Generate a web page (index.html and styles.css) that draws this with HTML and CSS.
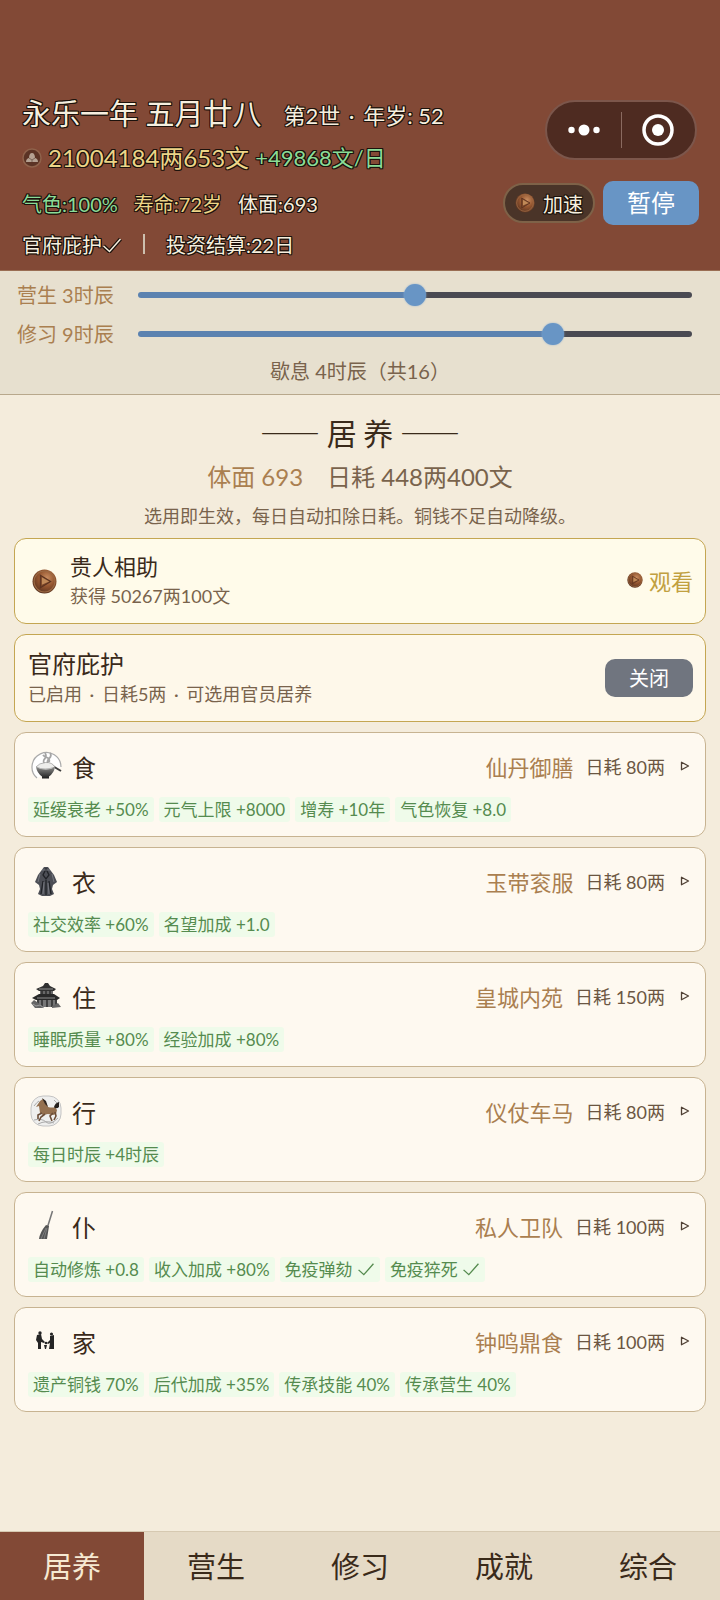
FILE: index.html
```html
<!DOCTYPE html>
<html lang="zh-CN">
<head>
    <meta charset="UTF-8">
    <meta name="viewport" content="width=device-width, initial-scale=1.0">
    <title>居养</title>
    <link rel="stylesheet" href="styles.css">
</head>
<body>
    <!-- 公用图标 -->
    <svg class="defs" aria-hidden="true">
        <defs>
            <radialGradient id="copper" cx="0.6" cy="0.35" r="0.7">
                <stop offset="0" stop-color="#c98d60"/>
                <stop offset="0.5" stop-color="#94552f"/>
                <stop offset="1" stop-color="#54301f"/>
            </radialGradient>
            <linearGradient id="ink" x1="0" y1="0" x2="0" y2="1">
                <stop offset="0" stop-color="#8c8c8a"/>
                <stop offset="1" stop-color="#1d1d1d"/>
            </linearGradient>
        </defs>
        <symbol id="coin" viewBox="0 0 24 24">
            <circle cx="12" cy="12" r="11.5" fill="url(#copper)"/>
            <circle cx="12" cy="12" r="10" fill="none" stroke="#9c6a44" stroke-width="1"/>
            <path d="M8 6l10 6-10 6z" fill="#7a4527" stroke="#5c3320" stroke-width="1"/>
            <path d="M9.500 8l7 4-7 3z" fill="#c08a58"/>
        </symbol>
        <symbol id="arrow" viewBox="0 0 10 10">
            <path d="M1.500 1.200v7.600L8.500 5z" fill="none" stroke="#4f4034" stroke-width="1.300" stroke-linejoin="round"/>
        </symbol>
    </svg>

    <header class="top">
        <div class="top-main">
            <div class="top-info">
                <div class="date-row">
                    <h1>永乐一年 五月廿八</h1>
                    <span class="age">第2世<span class="dot"> · </span>年岁: 52</span>
                </div>
                <div class="money-row">
                    <svg class="ingot" viewBox="0 0 20 20" aria-hidden="true">
                        <circle cx="10" cy="10" r="9" fill="#5b3325" stroke="#8f624b" stroke-width="1.500"/>
                        <path d="M4 14c0-3 2-4 3-4 0-3 1-5 3-5s3 2 3 5c1 0 3 1 3 4z" fill="#b5a192"/>
                        <path d="M7 10l3 2 3-2M10 12v2" fill="none" stroke="#7b6558"/>
                    </svg>
                    <span class="gold">21004184两653文</span>
                    <span class="green rate">+49868文/日</span>
                </div>
            </div>
            <div class="capsule">
                <button class="capsule-btn" aria-label="更多">
                    <svg width="32" height="12" viewBox="0 0 32 12"><g fill="#fff"><circle cx="3.500" cy="6" r="3.200"/><circle cx="16" cy="6" r="5.500"/><circle cx="28.500" cy="6" r="3.200"/></g></svg>
                </button>
                <button class="capsule-btn" aria-label="关闭小程序">
                    <svg width="32" height="32" viewBox="0 0 32 32"><circle cx="16" cy="16" r="14" fill="none" stroke="#fff" stroke-width="3.500"/><circle cx="16" cy="16" r="6" fill="#fff"/></svg>
                </button>
            </div>
        </div>
        <div class="stat-row">
            <span class="green">气色:100%</span>
            <span class="gold">寿命:72岁</span>
            <span>体面:693</span>
            <button class="speed-btn"><svg class="coin-s" aria-hidden="true"><use href="#coin"/></svg>加速</button>
            <button class="pause-btn">暂停</button>
        </div>
        <div class="note-row">
            <span>官府庇护<svg class="tick" viewBox="0 0 20 16" aria-hidden="true"><path class="tick-edge" d="M1.500 9l6 5.500 11-12.500"/><path d="M1.500 9l6 5.500 11-12.500"/></svg></span>
            <span class="bar"></span>
            <span>投资结算:22日</span>
        </div>
    </header>

    <section class="hours">
        <div class="hour-row">
            <label for="work">营生 3时辰</label>
            <div class="slider" style="--fill: 50%"><input type="range" id="work" min="0" max="6" value="3"></div>
        </div>
        <div class="hour-row">
            <label for="study">修习 9时辰</label>
            <div class="slider" style="--fill: 75%"><input type="range" id="study" min="0" max="12" value="9"></div>
        </div>
        <p class="rest">歇息 4时辰（共16）</p>
    </section>

    <main>
        <h2>—— 居 养 ——</h2>
        <p class="summary"><span class="brown">体面 693</span><span>日耗 448两400文</span></p>
        <p class="hint">选用即生效，每日自动扣除日耗。铜钱不足自动降级。</p>

        <div class="card help">
            <svg class="coin-l" aria-hidden="true"><use href="#coin"/></svg>
            <div class="card-text">
                <h3>贵人相助</h3>
                <p>获得 50267两100文</p>
            </div>
            <button class="watch-btn"><svg class="coin-xs" aria-hidden="true"><use href="#coin"/></svg>观看</button>
        </div>

        <div class="card shelter">
            <div class="card-text">
                <h3>官府庇护</h3>
                <p>已启用<span class="dot"> · </span>日耗5两<span class="dot"> · </span>可选用官员居养</p>
            </div>
            <button class="close-btn">关闭</button>
        </div>

        <div class="card item">
            <div class="item-head">
                <svg class="icon" viewBox="0 0 32 32" aria-hidden="true">
                    <path d="M7 28A14.500 14.500 0 1 1 31 17" fill="#fff" stroke="#aaa" stroke-width="1.200"/>
                    <path d="M15 14c-5-5 4-5 0-11M18 13c-3-4 6-5 2-10M13 5c2 3 8 2 6 7" fill="none" stroke="#a5a5a5" stroke-width="1.800"/>
                    <path d="M21 15l10 6" stroke="#3d3d3d" stroke-width="2"/>
                    <path d="M6 17q10 5 19 0-1 6-6 9.500v2h-7v-2Q7 23 6 17z" fill="url(#ink)"/>
                    <path d="M6 17q3-4 9.500-4.500t9.500 4.500q-10 4-19 0z" fill="#ededeb" stroke="#888" stroke-width="0.600"/>
                </svg>
                <h3>食</h3>
                <span class="grade">仙丹御膳</span>
                <span class="cost">日耗 80两</span>
                <svg class="arrow" aria-hidden="true"><use href="#arrow"/></svg>
            </div>
            <div class="tags"><span>延缓衰老 +50%</span><span>元气上限 +8000</span><span>增寿 +10年</span><span>气色恢复 +8.0</span></div>
        </div>

        <div class="card item">
            <div class="item-head">
                <svg class="icon" viewBox="0 0 32 32" aria-hidden="true">
                    <path d="M14 2h4l3 4 3 4 3 7-4 3-1 4 2 5-4 2h-8l-4-2 2-5-1-4-4-3 3-7 3-4z" fill="#4c4e55"/>
                    <path d="M16 4l-3 6 3 4 3-4zM13 16l-2 13M19 16l2 13M16 15v15" fill="none" stroke="#202227" stroke-width="1.300"/>
                    <path d="M10 9l-2 8M22 9l2 8M14 17l-1 12M18 18l1 11M12 5h8" fill="none" stroke="#80838a" stroke-width="0.800"/>
                </svg>
                <h3>衣</h3>
                <span class="grade">玉带衮服</span>
                <span class="cost">日耗 80两</span>
                <svg class="arrow" aria-hidden="true"><use href="#arrow"/></svg>
            </div>
            <div class="tags"><span>社交效率 +60%</span><span>名望加成 +1.0</span></div>
        </div>

        <div class="card item">
            <div class="item-head">
                <svg class="icon" viewBox="0 0 32 32" aria-hidden="true">
                    <path d="M15 3h3l2 3 6 3-2 2H9L6 9l7-3z" fill="#303030"/>
                    <path d="M10 11h13v4H10z" fill="#686868"/>
                    <path d="M9 14h15l6 4-3 2H6l-4-2z" fill="#292929"/>
                    <path d="M7 20h20v7H7z" fill="#777"/>
                    <path d="M8 20v7M12 20v7M17 20v7M22 20v7M26 20v7M12 11v3M16 11v3M20 11v3" stroke="#242424" stroke-width="1.300"/>
                    <path d="M1 23l3-3 3 2 4 3 3 3H5zM22 26l6-3 3 4-9 1z" fill="#666"/>
                    <path d="M3 24l3 2 4-1 4 3M9 9l14 0M7 18h18" fill="none" stroke="#aaa" stroke-width="0.800"/>
                </svg>
                <h3>住</h3>
                <span class="grade">皇城内苑</span>
                <span class="cost">日耗 150两</span>
                <svg class="arrow" aria-hidden="true"><use href="#arrow"/></svg>
            </div>
            <div class="tags"><span>睡眠质量 +80%</span><span>经验加成 +80%</span></div>
        </div>

        <div class="card item">
            <div class="item-head">
                <svg class="icon" viewBox="0 0 32 32" aria-hidden="true">
                    <rect x="1" y="1" width="30" height="30" rx="12" fill="#efefee" stroke="#c4c4c4"/>
                    <path d="M4 25q8-2 12 2t12-4M8 29q8-4 16-1M4 11q3-4 5-5M24 5l3 3" fill="none" stroke="#aaa"/>
                    <path d="M10 6l3-2 3 4 2 4q4 1 7 0l2 3-1 4-3 1-5-1-5 1-3-2-1-7-3 1z" fill="#94704f"/>
                    <path d="M12 18l-4 2 0 4M15 19l-4 3-2 4M23 18l-3 3 2 5M25 17l1 4-2 4" fill="none" stroke="#6b4d38" stroke-width="1.600"/>
                    <path d="M12 3l4 3 2 6-3-3z" fill="#31261f"/>
                    <path d="M24 12q1-4 5-5l0 5q-2 2-4 1z" fill="#241e1b"/>
                </svg>
                <h3>行</h3>
                <span class="grade">仪仗车马</span>
                <span class="cost">日耗 80两</span>
                <svg class="arrow" aria-hidden="true"><use href="#arrow"/></svg>
            </div>
            <div class="tags"><span>每日时辰 +4时辰</span></div>
        </div>

        <div class="card item">
            <div class="item-head">
                <svg class="icon" viewBox="0 0 32 32" aria-hidden="true">
                    <path d="M22.500 1l-5 16" stroke="#777" stroke-width="1.500"/>
                    <path d="M16 15l3 1-2 13-8 0q1-7 7-14z" fill="#555"/>
                    <path d="M16 18l-5 11M17 18l-3 11" stroke="#888" stroke-width="0.800"/>
                </svg>
                <h3>仆</h3>
                <span class="grade">私人卫队</span>
                <span class="cost">日耗 100两</span>
                <svg class="arrow" aria-hidden="true"><use href="#arrow"/></svg>
            </div>
            <div class="tags"><span>自动修炼 +0.8</span><span>收入加成 +80%</span><span>免疫弹劾 <svg class="tick" viewBox="0 0 20 16" aria-hidden="true"><path d="M1.500 9l6 5.500 11-12.500"/></svg></span><span>免疫猝死 <svg class="tick" viewBox="0 0 20 16" aria-hidden="true"><path d="M1.500 9l6 5.500 11-12.500"/></svg></span></div>
        </div>

        <div class="card item">
            <div class="item-head">
                <svg class="icon" viewBox="0 0 32 32" aria-hidden="true">
                    <g fill="#252525">
                        <circle cx="10" cy="8" r="1.700"/>
                        <path d="M7 10l4-1 1 5 3 3-1 1-3-1 0 7H8l0-6-2-3z"/>
                        <circle cx="21.500" cy="9" r="1.600"/>
                        <path d="M20 11l4-1 0 14h-5l1-6-2 1-1-1 3-3z"/>
                        <circle cx="16" cy="18" r="1.300"/>
                        <path d="M14 20h3l-1 4h-1z"/>
                    </g>
                </svg>
                <h3>家</h3>
                <span class="grade">钟鸣鼎食</span>
                <span class="cost">日耗 100两</span>
                <svg class="arrow" aria-hidden="true"><use href="#arrow"/></svg>
            </div>
            <div class="tags"><span>遗产铜钱 70%</span><span>后代加成 +35%</span><span>传承技能 40%</span><span>传承营生 40%</span></div>
        </div>
    </main>

    <nav>
        <a href="#" class="active">居养</a>
        <a href="#">营生</a>
        <a href="#">修习</a>
        <a href="#">成就</a>
        <a href="#">综合</a>
    </nav>

    <script>
        // 拖动时更新滑条填充
        document.querySelectorAll('.slider input').forEach(input => {
            input.addEventListener('input', () => {
                input.parentElement.style.setProperty('--fill', `${input.value / input.max * 100}%`);
            });
        });
    </script>
</body>
</html>
```

FILE: styles.css
```css
* {
    box-sizing: border-box;
}

body {
    margin: 0;
    min-height: 100vh;
    display: flex;
    flex-direction: column;
    background: #f4ecdc;
    color: #3a2a1a;
    font-family: Lato, "Noto Sans CJK SC", sans-serif;
    font-size: 18px;
}

h1, h2, h3, p {
    margin: 0;
    font-weight: normal;
}

button {
    font-family: inherit;
    border: none;
    padding: 0;
    cursor: pointer;
}

svg {
    flex-shrink: 0;
}

.defs {
    position: absolute;
    width: 0;
    height: 0;
}

.dot {
    padding: 0 3px;
    white-space: pre-wrap;
}

/* 顶部状态栏 */
.top {
    background: #824936;
    color: #f6efdf;
    padding: 91px 21px 9px 22px;
    border-bottom: 1px solid #9a6e54;
    text-shadow: 1px 0 #1c120c, -1px 0 #1c120c, 0 1px #1c120c, 0 -1px #1c120c,
                 1px 1px #1c120c, -1px -1px #1c120c, 1px -1px #1c120c, -1px 1px #1c120c;
}

.top-main {
    display: flex;
    justify-content: space-between;
    align-items: center;
}

.date-row {
    display: flex;
    align-items: center;
    gap: 22px;
}

h1 {
    font-size: 29px;
    line-height: 46px;
}

.age {
    font-size: 22px;
}

.money-row {
    display: flex;
    align-items: center;
    gap: 6px;
    font-size: 24px;
    line-height: 42px;
}

.rate {
    font-size: 22px;
}

.ingot {
    width: 20px;
    height: 20px;
}

.gold {
    color: #ecd588;
}

.green {
    color: #8bdc97;
}

.capsule {
    width: 152px;
    height: 60px;
    margin-top: -10px;
    margin-right: 2px;
    display: flex;
    align-items: center;
    background: #4e2b21;
    border: 2px solid #7c564b;
    border-radius: 30px;
}

.capsule-btn {
    flex: 1;
    height: 36px;
    display: flex;
    justify-content: center;
    align-items: center;
    background: none;
}

.capsule-btn + .capsule-btn {
    border-left: 1px solid #8a6a60;
}

.stat-row {
    display: flex;
    align-items: center;
    gap: 16px;
    height: 48px;
    font-size: 20px;
}

.speed-btn {
    margin-left: auto;
    margin-right: -8px;
    width: 92px;
    height: 40px;
    display: flex;
    justify-content: center;
    align-items: center;
    gap: 8px;
    background: #4a3428;
    border: 2px solid #7e6248;
    border-radius: 20px;
    color: #f6efdf;
    font-size: 20px;
    text-shadow: inherit;
}

.coin-s {
    width: 20px;
    height: 20px;
}

.pause-btn {
    width: 96px;
    height: 44px;
    padding-bottom: 4px;
    background: #6895c5;
    border-radius: 10px;
    color: #fff;
    font-size: 24px;
}

.note-row {
    display: flex;
    align-items: center;
    gap: 21px;
    height: 34px;
    font-size: 20px;
}

.bar {
    width: 2px;
    height: 20px;
    background: #cdbfae;
}

.tick {
    width: 18px;
    height: 14px;
    fill: none;
    stroke: currentColor;
    stroke-width: 1.5;
}

.note-row .tick {
    width: 20px;
    height: 16px;
}

.tick-edge {
    stroke: #1c120c;
    stroke-width: 4;
}

/* 时辰分配 */
.hours {
    background: #e7e0cf;
    border-bottom: 1px solid #b8a88c;
    padding: 4px 28px 5px 17px;
    color: #79634c;
    font-size: 20px;
}

.hour-row {
    display: flex;
    align-items: center;
    gap: 24px;
    height: 39px;
}

.hour-row label {
    color: #aa7f50;
}

.slider {
    flex: 1;
    height: 6px;
    display: flex;
    align-items: center;
    border-radius: 3px;
    background: linear-gradient(to right, #5b82b0 var(--fill), #4a4a52 var(--fill));
}

/* 滑块中心可以走到滑条两端 */
.slider input {
    flex: 1;
    height: 22px;
    margin: 0 -11px;
    appearance: none;
    background: none;
}

.slider input::-webkit-slider-thumb {
    appearance: none;
    width: 22px;
    height: 22px;
    border-radius: 50%;
    background: #6895c5;
    box-shadow: 0 0 2px #8fb0d3;
}

.rest {
    text-align: center;
    line-height: 36px;
    padding-left: 11px;
}

/* 内容 */
main {
    flex: 1;
    padding: 16px 14px;
}

h2 {
    text-align: center;
    font-family: "Noto Sans CJK SC", sans-serif;
    font-size: 30px;
    line-height: 42px;
}

.summary {
    display: flex;
    justify-content: center;
    gap: 24px;
    font-size: 24px;
    line-height: 48px;
    color: #79634c;
}

.brown {
    color: #aa7f50;
}

.hint {
    text-align: center;
    line-height: 30px;
    margin-bottom: 7px;
    color: #79634c;
}

.card {
    background: #fef9f0;
    border: 1px solid #c7b391;
    border-radius: 12px;
    margin-bottom: 10px;
}

.help, .shelter {
    display: flex;
    align-items: center;
    padding: 0 12px 0 13px;
    border-color: #c4a652;
}

.help {
    height: 86px;
    background: #fffbea;
}

.shelter {
    height: 88px;
    background: #fef8ea;
}

.card-text {
    flex: 1;
}

.card-text h3 {
    font-size: 24px;
    line-height: 32px;
}

.card-text p {
    line-height: 28px;
    color: #79634c;
}

.help h3 {
    font-size: 22px;
    line-height: 30px;
}

.coin-l {
    width: 25px;
    height: 25px;
    margin: 0 13px 0 4px;
}

.coin-xs {
    width: 16px;
    height: 16px;
}

.watch-btn {
    display: flex;
    align-items: center;
    gap: 6px;
    padding-bottom: 2px;
    background: none;
    color: #c1a040;
    font-size: 22px;
}

.close-btn {
    width: 88px;
    height: 38px;
    padding-bottom: 2px;
    background: #70757f;
    border-radius: 10px;
    color: #fff;
    font-size: 20px;
}

.item {
    padding: 14px 13px;
}

.item-head {
    display: flex;
    align-items: center;
    height: 38px;
    margin-bottom: 12px;
    padding: 0 2px;
}

.icon {
    width: 32px;
    height: 32px;
    margin-right: 10px;
}

.item h3 {
    flex: 1;
    font-size: 24px;
}

.grade {
    font-size: 22px;
    color: #aa7f50;
    margin-right: 12px;
}

.cost {
    color: #6b5642;
    margin-right: 15px;
}

.arrow {
    width: 10px;
    height: 10px;
}

.tags {
    display: flex;
    gap: 5px;
    font-size: 17px;
    line-height: 25px;
    color: #558b4f;
}

.tags span {
    padding: 0 5px;
    background: #effbea;
    border-radius: 3px;
}

/* 底部导航 */
nav {
    display: flex;
    height: 69px;
    background: #e5dac6;
    border-top: 1px solid #d6c9b1;
}

nav a {
    flex: 1;
    display: flex;
    justify-content: center;
    align-items: center;
    padding-bottom: 3px;
    font-size: 29px;
    color: #3a2a1a;
    text-decoration: none;
}

nav .active {
    background: #824936;
    color: #f6e9d2;
}
```
